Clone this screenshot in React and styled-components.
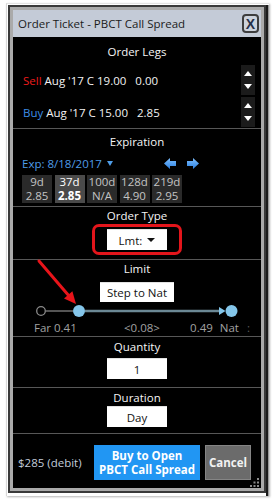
import React from 'react'
import styled, { createGlobalStyle } from 'styled-components'

const GlobalStyle = createGlobalStyle`
  html, body {
    margin: 0;
    padding: 0;
    background: #fff;
  }
  body {
    font-family: "Open Sans", "Noto Sans", sans-serif;
    font-size: 11.5px;
  }
  * {
    box-sizing: border-box;
  }
`

const Page = styled.div`
  width: 275px;
  height: 504px;
  padding: 3px 0 0 6px;
  background: #fff;
  overflow: hidden;
`

const Shot = styled.div`
  display: flex;
  width: 263px;
  height: 493px;
  padding: 1px 0 0 1px;
  border-left: 1px solid #d8d8d8;
  border-top: 1px solid #e4e4e4;
  box-shadow: 1px 1px 2px rgba(0, 0, 0, 0.3);
`

const Window = styled.div`
  width: 258px;
  height: 488px;
  border: 2px solid #3a3a3a;
  display: flex;
  flex-direction: column;
`

const BehindApp = styled.div`
  width: 3px;
  align-self: stretch;
  background: #1c1c1c;
  border-right: 1px solid #9a9a9a;
`

const Frame = styled.div`
  flex: 1;
  border: 3px solid #aaaaaa;
  display: flex;
  flex-direction: column;
`

const TitleBar = styled.div`
  height: 27px;
  flex: none;
  background: #c4cbd7;
  color: #1b1b1b;
  display: flex;
  align-items: center;
  justify-content: space-between;
  padding: 0 2px 0 5px;
`

const CloseButton = styled.div`
  width: 17px;
  height: 19px;
  border: 2px solid #3e3e3e;
  border-radius: 4px;
  background: #cdd3dc;
  color: #25304a;
  font: bold 14px "Liberation Sans", Arial, sans-serif;
  display: flex;
  align-items: center;
  justify-content: center;
`

const Content = styled.div`
  flex: 1;
  position: relative;
  background: #000;
  color: #f3f3f3;
  display: flex;
  flex-direction: column;
`

const Section = styled.section`
  display: flex;
  flex-direction: column;
  padding-bottom: ${p => p.$pb || 0}px;
  border-bottom: ${p => (p.$last ? 'none' : '1px solid #575757')};
`

const Heading = styled.div`
  height: ${p => p.$h}px;
  display: flex;
  align-items: center;
  justify-content: center;
  color: #f5f5f5;
`

const LegRow = styled.div`
  height: 30px;
  margin-bottom: ${p => p.$gap || 0}px;
  display: flex;
  align-items: center;
  padding: 0 6px 0 10px;
  white-space: pre;
`

const Side = styled.span`
  color: ${p => (p.$buy ? '#3d8fe8' : '#ee1c1c')};
`

const Price = styled.span`
  margin-left: 9px;
`

const Spinner = styled.div`
  margin-left: auto;
  width: 14px;
  height: 30px;
  background: #1b1b1b;
  display: flex;
  flex-direction: column;
  align-items: center;
  justify-content: space-between;
  padding: 6px 0 6px;
`

const Tri = styled.span`
  width: 0;
  height: 0;
  flex: none;
  border-left: ${p => p.$w / 2}px solid transparent;
  border-right: ${p => p.$w / 2}px solid transparent;
  ${p =>
    p.$up
      ? `border-bottom: ${p.$h}px solid ${p.$c};`
      : `border-top: ${p.$h}px solid ${p.$c};`}
`

const ExpRow = styled.div`
  height: 20px;
  display: flex;
  align-items: center;
  padding-left: 9px;
`

const ExpPicker = styled.div`
  width: 142px;
  display: flex;
  align-items: center;
  gap: 5px;
  color: #4f9de8;
`

const NavArrows = styled.div`
  display: flex;
  align-items: center;
  gap: 11px;
`

const Tiles = styled.div`
  display: flex;
  gap: 2.5px;
  padding-left: 9px;
  margin-top: 2px;
`

const Tile = styled.div`
  width: 30px;
  height: 28px;
  background: ${p => (p.$active ? '#4a4a4a' : '#2a2a2a')};
  color: ${p => (p.$active ? '#fff' : '#c4c4c4')};
  display: flex;
  flex-direction: column;
  align-items: center;
  justify-content: center;
  line-height: 14px;
`

const TileValue = styled.span`
  font-weight: ${p => (p.$active ? 700 : 400)};
`

const Highlight = styled.div`
  align-self: center;
  border: 3px solid #e3151b;
  border-radius: 7px;
  padding: 2px 12px;
`

const Field = styled.div`
  align-self: center;
  width: ${p => p.$w || 60}px;
  height: ${p => p.$h || 21}px;
  margin-top: ${p => p.$mt || 0}px;
  background: #fff;
  border-top: 1px solid #e2e2e2;
  color: #111;
  display: flex;
  align-items: center;
  justify-content: center;
  gap: 5px;
`

const SliderTrack = styled.svg`
  display: block;
  width: 248px;
  height: 18px;
`

const SliderLabels = styled.div`
  height: 14px;
  display: grid;
  grid-template-columns: 1fr auto 1fr;
  align-items: center;
  padding: 0 11px 0 21px;
  color: #a2a2a2;
`

const RightLabel = styled.div`
  display: flex;
  justify-content: flex-end;
  gap: 7px;
`

const Faint = styled.span`
  color: #5e5e5e;
  margin-left: 1px;
`

const Footer = styled.div`
  flex: 1;
  display: flex;
  align-items: flex-start;
  padding: 11px 10px 0 5px;
`

const Debit = styled.div`
  height: 35px;
  display: flex;
  align-items: center;
  color: #c3ccda;
`

const Actions = styled.div`
  margin-left: auto;
  display: flex;
  gap: 5px;
`

const ActionButton = styled.div`
  width: ${p => p.$w}px;
  height: 35px;
  background: ${p => (p.$primary ? '#2196f3' : '#6b6b6b')};
  border: 1px solid ${p => (p.$primary ? '#2196f3' : '#858585')};
  color: ${p => (p.$primary ? '#fff' : '#f2f2f2')};
  font-weight: 700;
  font-size: 11.5px;
  line-height: 14px;
  display: flex;
  flex-direction: column;
  align-items: center;
  justify-content: center;
  text-align: center;
`

const Grip = styled.svg`
  position: absolute;
  right: 1px;
  bottom: 0;
  width: 10px;
  height: 10px;
`

const Pointer = styled.svg`
  position: absolute;
  left: 20px;
  top: 219px;
  width: 46px;
  height: 52px;
  pointer-events: none;
`

const expirations = [
  { days: '9d', price: '2.85' },
  { days: '37d', price: '2.85', active: true },
  { days: '100d', price: 'N/A' },
  { days: '128d', price: '4.90' },
  { days: '219d', price: '2.95' },
]

function Arrow({ flip }) {
  return (
    <svg width="12" height="11" viewBox="0 0 12 11" style={flip ? { transform: 'scaleX(-1)' } : undefined}>
      <defs>
        <linearGradient id={flip ? 'ag2' : 'ag1'} x1="0" y1="0" x2="0" y2="1">
          <stop offset="0" stopColor="#7fc0ff" />
          <stop offset="1" stopColor="#2a7fe0" />
        </linearGradient>
      </defs>
      <path d="M0 5.5 L6 0 L6 3 L12 3 L12 8 L6 8 L6 11 Z" fill={`url(#${flip ? 'ag2' : 'ag1'})`} />
    </svg>
  )
}

export default function App() {
  return (
    <Page>
      <GlobalStyle />
      <Shot>
        <Window>
          <Frame>
            <TitleBar>
              <span>Order Ticket - PBCT Call Spread</span>
              <CloseButton>X</CloseButton>
            </TitleBar>
            <Content>
              <Section $pb={1}>
                <Heading $h={28}>Order Legs</Heading>
                <LegRow $gap={2}>
                  <Side>Sell</Side> Aug '17 C 19.00
                  <Price>0.00</Price>
                  <Spinner>
                    <Tri $up $w={8} $h={5} $c="#fff" />
                    <Tri $w={8} $h={5} $c="#fff" />
                  </Spinner>
                </LegRow>
                <LegRow>
                  <Side $buy>Buy</Side> Aug '17 C 15.00
                  <Price>2.85</Price>
                  <Spinner>
                    <Tri $up $w={8} $h={5} $c="#fff" />
                    <Tri $w={8} $h={5} $c="#fff" />
                  </Spinner>
                </LegRow>
              </Section>

              <Section $pb={3}>
                <Heading $h={24}>Expiration</Heading>
                <ExpRow>
                  <ExpPicker>
                    Exp: 8/18/2017
                    <Tri $w={7} $h={5} $c="#4f9de8" />
                  </ExpPicker>
                  <NavArrows>
                    <Arrow />
                    <Arrow flip />
                  </NavArrows>
                </ExpRow>
                <Tiles>
                  {expirations.map(e => (
                    <Tile key={e.days} $active={e.active}>
                      <span>{e.days}</span>
                      <TileValue $active={e.active}>{e.price}</TileValue>
                    </Tile>
                  ))}
                </Tiles>
              </Section>

              <Section $pb={4}>
                <Heading $h={17}>Order Type</Heading>
                <Highlight>
                  <Field>
                    Lmt:
                    <Tri $w={8} $h={4} $c="#111" />
                  </Field>
                </Highlight>
              </Section>

              <Section $pb={2}>
                <Heading $h={16}>Limit</Heading>
                <Field $w={74} $h={20} $mt={6}>Step to Nat</Field>
                <SliderTrack viewBox="0 0 248 18">
                  <line x1="32.5" y1="9" x2="60" y2="9" stroke="#555" strokeWidth="2" />
                  <circle cx="28" cy="9" r="4.3" fill="#000" stroke="#8a8a8a" strokeWidth="1.3" />
                  <line x1="72" y1="9" x2="207" y2="9" stroke="#6b8895" strokeWidth="2.5" />
                  <circle cx="66" cy="9" r="6" fill="#84c6ea" />
                  <path d="M206 5 L212.5 9 L206 13 Z" fill="#84c6ea" />
                  <circle cx="218.5" cy="9" r="6" fill="#84c6ea" />
                </SliderTrack>
                <SliderLabels>
                  <span>Far 0.41</span>
                  <span>&lt;0.08&gt;</span>
                  <RightLabel>
                    <span>0.49</span>
                    <span>Nat</span>
                    <Faint>:</Faint>
                  </RightLabel>
                </SliderLabels>
              </Section>

              <Section $pb={8}>
                <Heading $h={18}>Quantity</Heading>
                <Field $mt={3}>1</Field>
              </Section>

              <Section $pb={6}>
                <Heading $h={18}>Duration</Heading>
                <Field>Day</Field>
              </Section>

              <Footer>
                <Debit>$285 (debit)</Debit>
                <Actions>
                  <ActionButton $primary $w={106}>
                    <span>Buy to Open</span>
                    <span>PBCT Call Spread</span>
                  </ActionButton>
                  <ActionButton $w={46}>Cancel</ActionButton>
                </Actions>
              </Footer>

              <Grip viewBox="0 0 10 10">
                <rect x="7" y="0" width="2" height="2" fill="#8a8a8a" />
                <rect x="3.5" y="3.5" width="2" height="2" fill="#8a8a8a" />
                <rect x="7" y="3.5" width="2" height="2" fill="#8a8a8a" />
                <rect x="0" y="7" width="2" height="2" fill="#8a8a8a" />
                <rect x="3.5" y="7" width="2" height="2" fill="#8a8a8a" />
                <rect x="7" y="7" width="2" height="2" fill="#8a8a8a" />
              </Grip>

              <Pointer viewBox="0 0 46 52">
                <line x1="6" y1="5" x2="35.2" y2="38.9" stroke="#e8141a" strokeWidth="3" strokeLinecap="round" />
                <path d="M31 42.5 L39.4 35.3 L43 48 Z" fill="#e8141a" />
              </Pointer>
            </Content>
          </Frame>
        </Window>
        <BehindApp />
      </Shot>
    </Page>
  )
}
